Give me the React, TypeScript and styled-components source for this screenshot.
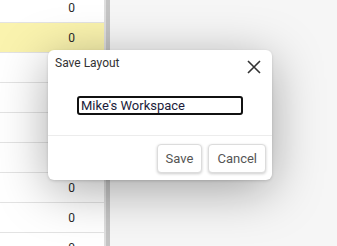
import * as React from 'react'
import styled, { createGlobalStyle } from 'styled-components'

const GlobalStyle = createGlobalStyle`
  html, body {
    margin: 0;
    padding: 0;
    background: #ffffff;
    font-family: Roboto, "Liberation Sans", Arial, sans-serif;
  }
`

const Screen = styled.div`
  position: relative;
  display: flex;
  width: 337px;
  height: 246px;
  overflow: hidden;
`

const GridColumn = styled.div`
  width: 104px;
  display: flex;
  flex-direction: column;
  margin-top: -7px;
  background: #ffffff;
`

const Row = styled.div<{ $selected?: boolean }>`
  flex: 0 0 30px;
  box-sizing: border-box;
  display: flex;
  align-items: center;
  justify-content: flex-end;
  padding-right: 29px;
  border-bottom: 1px solid #e3e3e3;
  background: ${props => (props.$selected ? '#faf3ae' : '#ffffff')};
  color: #2a2a2a;
  font-size: 12px;
`

const Splitter = styled.div`
  width: 4px;
  border-left: 2px solid #dedede;
  background: #c4c4c4;
`

const SidePane = styled.div`
  flex: 1;
  background: #f6f6f6;
`

const Dialog = styled.div`
  position: absolute;
  left: 48px;
  top: 50px;
  width: 224px;
  height: 130px;
  box-sizing: border-box;
  display: flex;
  flex-direction: column;
  background: #ffffff;
  border-radius: 6px;
  box-shadow: 0 10px 50px rgba(0, 0, 0, 0.34), 0 1px 3px rgba(0, 0, 0, 0.15);
`

const Header = styled.div`
  display: flex;
  align-items: flex-start;
  justify-content: space-between;
  padding: 6px 10px 0 7px;
  height: 22px;
`

const Title = styled.span`
  font-size: 12px;
  line-height: 14px;
  color: #333333;
`

const CloseButton = styled.button`
  border: none;
  background: none;
  padding: 0;
  margin-top: 3px;
  width: 16px;
  height: 16px;
  display: flex;
  align-items: center;
  justify-content: center;
`

const Body = styled.div`
  flex: 1;
  display: flex;
  justify-content: center;
  align-items: flex-start;
  padding-top: 18px;
  border-bottom: 1px solid #ececec;
`

const NameInput = styled.input`
  width: 166px;
  height: 19px;
  box-sizing: border-box;
  border: 2px solid #111111;
  border-radius: 3px;
  padding: 0 2px;
  font-family: Roboto, "Liberation Sans", Arial, sans-serif;
  font-size: 13px;
  color: #1c1c3a;
  outline: none;
  caret-color: #111111;
`

const Footer = styled.div`
  display: flex;
  justify-content: flex-end;
  gap: 6px;
  padding: 8px 6px 7px 0;
`

const Button = styled.button`
  height: 29px;
  padding: 0 8px;
  border: 1px solid #dcdcdc;
  border-radius: 4px;
  background: #ffffff;
  box-shadow: 0 1px 3px rgba(0, 0, 0, 0.2);
  font-family: Roboto, "Liberation Sans", Arial, sans-serif;
  font-size: 13px;
  color: #555555;
`

const rows = [false, true, false, false, false, false, false, false, false]

export default function App() {
  const inputRef = React.useRef<HTMLInputElement>(null)

  React.useEffect(() => {
    const el = inputRef.current
    if (el) {
      el.focus()
      el.setSelectionRange(el.value.length, el.value.length)
    }
  }, [])

  return (
    <>
      <GlobalStyle />
      <Screen>
        <GridColumn>
          {rows.map((selected, i) => (
            <Row key={i} $selected={selected}>0</Row>
          ))}
        </GridColumn>
        <Splitter />
        <SidePane />

        <Dialog>
          <Header>
            <Title>Save Layout</Title>
            <CloseButton aria-label="Close">
              <svg width="14" height="14" viewBox="0 0 14 14">
                <path d="M1 1 L13 13 M13 1 L1 13" stroke="#333" strokeWidth="1.6" />
              </svg>
            </CloseButton>
          </Header>
          <Body>
            <NameInput ref={inputRef} defaultValue="Mike's Workspace" />
          </Body>
          <Footer>
            <Button>Save</Button>
            <Button>Cancel</Button>
          </Footer>
        </Dialog>
      </Screen>
    </>
  )
}
